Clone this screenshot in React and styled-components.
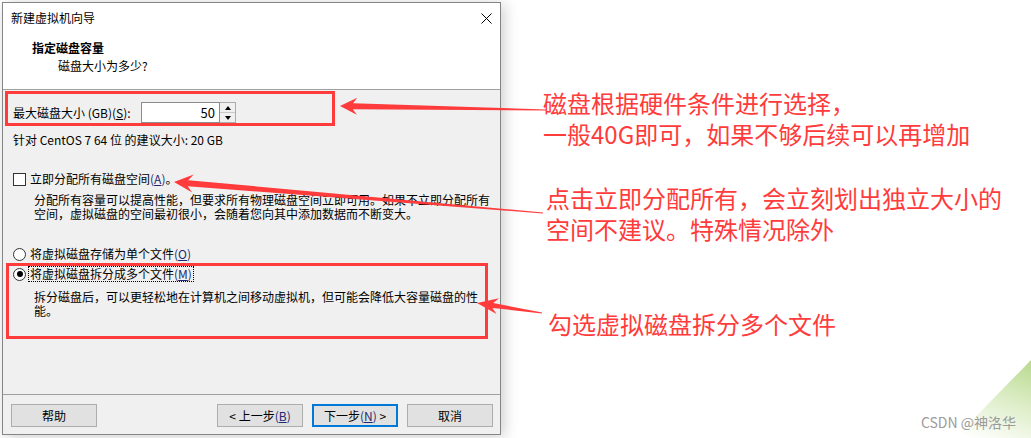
import React from 'react';
import styled, { createGlobalStyle } from 'styled-components';

const GlobalStyle = createGlobalStyle`
  html, body { margin: 0; padding: 0; background: #fff; }
  body { font-family: "Noto Sans CJK SC", "Noto Sans", sans-serif; }
`;

const RED = '#ff3b3b';

const Page = styled.div`
  position: relative;
  width: 1031px;
  height: 438px;
  box-sizing: border-box;
  padding: 2px 0 0 2px;
  display: flex;
  align-items: flex-start;
  overflow: hidden;
  background: #fff;
`;

const Dialog = styled.div`
  flex: none;
  width: 499px;
  height: 433px;
  box-sizing: border-box;
  border: 1px solid #858585;
  background: #f0f0f0;
  display: flex;
  flex-direction: column;
  box-shadow: 3px 2px 14px rgba(0, 0, 0, 0.2);
  font-family: "Noto Sans CJK SC", "Noto Sans", sans-serif;
  font-size: 12px;
  color: #000;
`;

const Header = styled.div`
  height: 87px;
  box-sizing: border-box;
  background: #fff;
  border-bottom: 1px solid #a0a0a0;
  display: flex;
  flex-direction: column;
`;

const TitleBar = styled.div`
  height: 30px;
  display: flex;
  align-items: center;
  justify-content: space-between;
  padding: 0 8px;
`;

const Title = styled.span`
  line-height: 16px;
`;

const Heading = styled.div`
  margin-top: 7px;
  padding-left: 29px;
  line-height: 16px;
  font-weight: bold;
`;

const SubHeading = styled.div`
  margin-top: 2px;
  padding-left: 55px;
  line-height: 16px;
`;

const Body = styled.div`
  flex: 1;
  padding: 12px 0 0 10px;
  display: flex;
  flex-direction: column;
`;

const SizeRow = styled.div`
  display: flex;
  align-items: center;
  height: 21px;
`;

const SizeLabel = styled.label`
  width: 128px;
  line-height: 16px;
`;

const NumberBox = styled.div`
  width: 79px;
  height: 21px;
  box-sizing: border-box;
  border: 1px solid #8c8c8c;
  background: #fff;
  display: flex;
  align-items: center;
  justify-content: flex-end;
  padding-right: 4px;
  font-size: 13px;
`;

const Spinner = styled.div`
  width: 16px;
  height: 21px;
  box-sizing: border-box;
  border: 1px solid #acacac;
  border-left: none;
  display: flex;
  flex-direction: column;
`;

const SpinHalf = styled.div`
  flex: 1;
  background: #f0f0f0;
  display: flex;
  align-items: center;
  justify-content: center;
  border-top: ${(p) => (p.$down ? '1px solid #c8c8c8' : 'none')};
  &::after {
    content: '';
    width: 0;
    height: 0;
    border-left: 3.5px solid transparent;
    border-right: 3.5px solid transparent;
    ${(p) =>
      p.$down ? 'border-top: 4px solid #000;' : 'border-bottom: 4px solid #000;'}
  }
`;

const Hint = styled.div`
  margin-top: 9px;
  line-height: 16px;
`;

const OptionRow = styled.div`
  display: flex;
  align-items: center;
  height: 16px;
  margin-top: ${(p) => p.$top}px;
  gap: 3px;
`;

const CheckBox = styled.span`
  width: 13px;
  height: 13px;
  box-sizing: border-box;
  border: 1px solid #333;
  background: #fff;
  flex: none;
`;

const Radio = styled.span`
  width: 13px;
  height: 13px;
  box-sizing: border-box;
  border: 1px solid #333;
  border-radius: 50%;
  background: #fff;
  flex: none;
  display: flex;
  align-items: center;
  justify-content: center;
  &::after {
    content: '';
    width: 6px;
    height: 6px;
    border-radius: 50%;
    background: ${(p) => (p.$checked ? '#000' : 'transparent')};
  }
`;

const OptionLabel = styled.span`
  line-height: 14px;
  padding: 0 1px;
  outline: ${(p) => (p.$focused ? '1px dotted #000' : 'none')};
`;

const Desc = styled.div`
  margin-top: ${(p) => p.$top}px;
  padding-left: 21px;
  line-height: 14px;
  white-space: nowrap;
`;

const Key = styled.span`
  color: ${(p) => (p.$blue ? '#1d2a73' : 'inherit')};
  u {
    text-decoration: underline;
    text-underline-offset: 1px;
  }
`;

const Footer = styled.div`
  height: 40px;
  box-sizing: border-box;
  border-top: 1px solid #a0a0a0;
  padding: 9px 7px 0 8px;
  display: flex;
  justify-content: space-between;
  align-items: flex-start;
`;

const ButtonGroup = styled.div`
  display: flex;
  gap: 9px;
`;

const Button = styled.button`
  width: 86px;
  height: 23px;
  box-sizing: border-box;
  margin: 0;
  padding: 0;
  background: #e1e1e1;
  border: ${(p) => (p.$primary ? '2px solid #0078d7' : '1px solid #adadad')};
  font-family: "Noto Sans CJK SC", "Noto Sans", sans-serif;
  font-size: 12px;
  color: #000;
  line-height: 16px;
`;

const Notes = styled.div`
  flex: 1;
  padding-left: 42px;
  display: flex;
  flex-direction: column;
  font-family: "Noto Sans CJK SC", "Noto Sans", sans-serif;
  font-size: 24px;
  color: ${RED};
`;

const NoteBlock = styled.div`
  margin-top: ${(p) => p.$top}px;
  margin-left: ${(p) => p.$indent}px;
  line-height: 31px;
  white-space: nowrap;
`;

const Overlay = styled.svg`
  position: absolute;
  left: 0;
  top: 0;
  width: 1031px;
  height: 438px;
  pointer-events: none;
`;

const Corner = styled.div`
  position: absolute;
  right: 0;
  bottom: 0;
  width: 76px;
  height: 78px;
  clip-path: polygon(100% 0, 100% 100%, 0 100%);
  background: linear-gradient(200deg, #b9d98e 0%, #dcedc6 45%, #ffffff 95%);
`;

const Watermark = styled.div`
  position: absolute;
  right: 15px;
  bottom: 8px;
  font-family: "Noto Sans CJK SC", "Liberation Sans", sans-serif;
  font-size: 14px;
  line-height: 16px;
  color: #9b9b9b;
`;

function arrowPoints(x1, y1, x2, y2, { L, H, wHead, wTail, notch }) {
  const dx = x2 - x1;
  const dy = y2 - y1;
  const len = Math.hypot(dx, dy);
  const ux = dx / len;
  const uy = dy / len;
  const nx = -uy;
  const ny = ux;
  const bx = x2 - ux * L;
  const by = y2 - uy * L;
  const jx = x2 - ux * (L - notch);
  const jy = y2 - uy * (L - notch);
  const p = (a, b) => `${a.toFixed(1)},${b.toFixed(1)}`;
  return [
    p(x1 + (nx * wTail) / 2, y1 + (ny * wTail) / 2),
    p(jx + (nx * wHead) / 2, jy + (ny * wHead) / 2),
    p(bx + nx * H, by + ny * H),
    p(x2, y2),
    p(bx - nx * H, by - ny * H),
    p(jx - (nx * wHead) / 2, jy - (ny * wHead) / 2),
    p(x1 - (nx * wTail) / 2, y1 - (ny * wTail) / 2),
  ].join(' ');
}

const arrows = [
  { from: [546, 110], to: [340, 106], opt: { L: 17, H: 8.5, wHead: 6, wTail: 1, notch: 4 } },
  { from: [543, 213], to: [174, 182], opt: { L: 19, H: 9, wHead: 6, wTail: 1, notch: 5 } },
  { from: [542, 313], to: [477, 303], opt: { L: 21, H: 8, wHead: 5, wTail: 0.8, notch: 5 } },
];

function CloseIcon() {
  return (
    <svg width="11" height="11" viewBox="0 0 11 11">
      <path d="M0.5 0.5 L10.5 10.5 M10.5 0.5 L0.5 10.5" stroke="#000" strokeWidth="1" />
    </svg>
  );
}

export default function App() {
  return (
    <>
      <GlobalStyle />
      <Page>
        <Dialog>
          <Header>
            <TitleBar>
              <Title>新建虚拟机向导</Title>
              <CloseIcon />
            </TitleBar>
            <Heading>指定磁盘容量</Heading>
            <SubHeading>磁盘大小为多少?</SubHeading>
          </Header>
          <Body>
            <SizeRow>
              <SizeLabel>
                最大磁盘大小 (GB)(<Key><u>S</u></Key>):
              </SizeLabel>
              <NumberBox>50</NumberBox>
              <Spinner>
                <SpinHalf />
                <SpinHalf $down />
              </Spinner>
            </SizeRow>
            <Hint>针对 CentOS 7 64 位 的建议大小: 20 GB</Hint>
            <OptionRow $top={23}>
              <CheckBox />
              <OptionLabel>
                立即分配所有磁盘空间<Key $blue>(<u>A</u>)</Key>。
              </OptionLabel>
            </OptionRow>
            <Desc $top={6}>
              分配所有容量可以提高性能，但要求所有物理磁盘空间立即可用。如果不立即分配所有
              <br />
              空间，虚拟磁盘的空间最初很小，会随着您向其中添加数据而不断变大。
            </Desc>
            <OptionRow $top={25}>
              <Radio />
              <OptionLabel>
                将虚拟磁盘存储为单个文件<Key $blue>(<u>O</u>)</Key>
              </OptionLabel>
            </OptionRow>
            <OptionRow $top={4}>
              <Radio $checked />
              <OptionLabel $focused>
                将虚拟磁盘拆分成多个文件<Key $blue>(<u>M</u>)</Key>
              </OptionLabel>
            </OptionRow>
            <Desc $top={8}>
              拆分磁盘后，可以更轻松地在计算机之间移动虚拟机，但可能会降低大容量磁盘的性
              <br />
              能。
            </Desc>
          </Body>
          <Footer>
            <Button>帮助</Button>
            <ButtonGroup>
              <Button>
                &lt; 上一步<Key $blue>(<u>B</u>)</Key>
              </Button>
              <Button $primary>
                下一步<Key $blue>(<u>N</u>)</Key> &gt;
              </Button>
              <Button>取消</Button>
            </ButtonGroup>
          </Footer>
        </Dialog>
        <Notes>
          <NoteBlock $top={85} $indent={0}>
            磁盘根据硬件条件进行选择，
            <br />
            一般40G即可，如果不够后续可以再增加
          </NoteBlock>
          <NoteBlock $top={33} $indent={3}>
            点击立即分配所有，会立刻划出独立大小的
            <br />
            空间不建议。特殊情况除外
          </NoteBlock>
          <NoteBlock $top={64} $indent={5}>
            勾选虚拟磁盘拆分多个文件
          </NoteBlock>
        </Notes>
        <Corner />
        <Watermark>CSDN @神洛华</Watermark>
        <Overlay viewBox="0 0 1031 438">
          <rect x="6.5" y="92.5" width="327" height="32" fill="none" stroke={RED} strokeWidth="3" />
          <rect x="7.5" y="264.5" width="479" height="73" fill="none" stroke={RED} strokeWidth="3" />
          {arrows.map((a, i) => (
            <polygon
              key={i}
              points={arrowPoints(a.from[0], a.from[1], a.to[0], a.to[1], a.opt)}
              fill={RED}
            />
          ))}
        </Overlay>
      </Page>
    </>
  );
}
